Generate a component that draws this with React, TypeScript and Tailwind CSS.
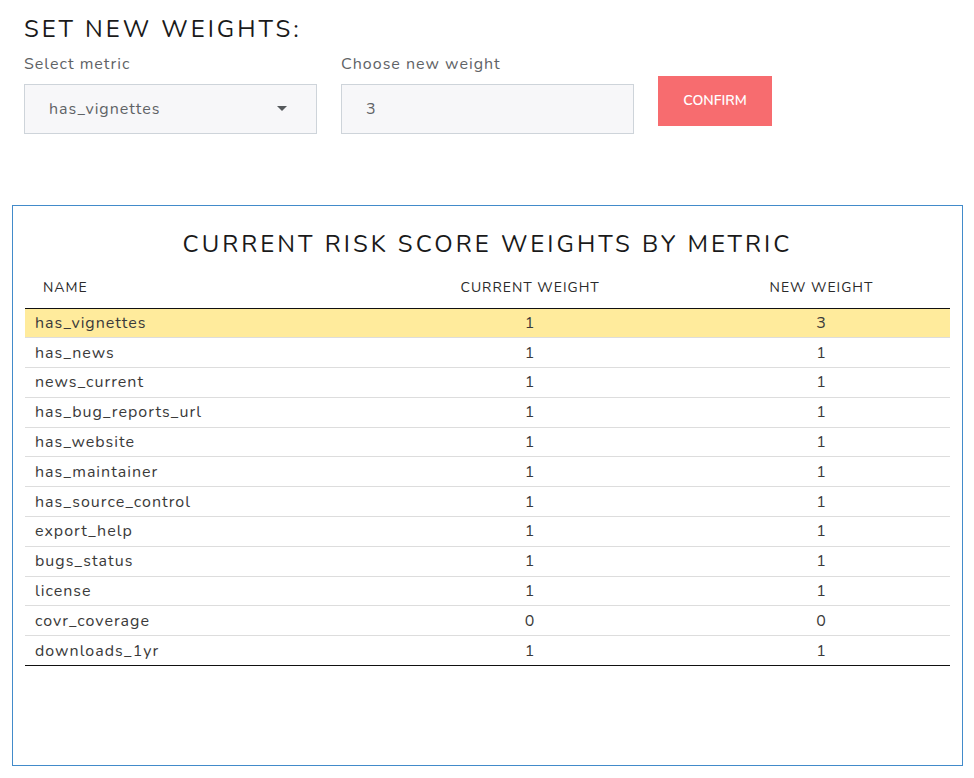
const rows: [string, number, number][] = [
  ["has_vignettes", 1, 3],
  ["has_news", 1, 1],
  ["news_current", 1, 1],
  ["has_bug_reports_url", 1, 1],
  ["has_website", 1, 1],
  ["has_maintainer", 1, 1],
  ["has_source_control", 1, 1],
  ["export_help", 1, 1],
  ["bugs_status", 1, 1],
  ["license", 1, 1],
  ["covr_coverage", 0, 0],
  ["downloads_1yr", 1, 1],
];

export default function App() {
  return (
    <main className="pt-[13px] pr-[11px] pb-3 pl-3 font-['Nunito','Nunito_Sans','Open_Sans',sans-serif] text-[#1a1a1a]">
      <section className="px-3">
        <h1 className="text-2xl leading-8 tracking-[3px] uppercase">Set new weights:</h1>
        <form className="mt-[7px] flex gap-6" onSubmit={(e) => e.preventDefault()}>
          <div className="flex max-w-[293px] flex-1 flex-col">
            <label htmlFor="metric" className="h-8 text-base tracking-[1px] text-[#5f6366]">Select metric</label>
            <div className="relative">
              <select id="metric" defaultValue="has_vignettes" className="h-[50px] w-full appearance-none border border-[#ced4da] bg-[#f7f7f9] px-6 text-base tracking-[1px] text-[#5f6366]">
                {rows.map(([name]) => <option key={name}>{name}</option>)}
              </select>
              <svg className="pointer-events-none absolute top-[22px] right-[30px]" width="10" height="5" viewBox="0 0 10 5" aria-hidden="true"><path d="M0 0h10L5 5z" fill="#55595c" /></svg>
            </div>
          </div>
          <div className="flex max-w-[293px] flex-1 flex-col">
            <label htmlFor="weight" className="h-8 text-base tracking-[1px] text-[#5f6366]">Choose new weight</label>
            <input id="weight" defaultValue="3" className="h-[50px] w-full border border-[#ced4da] bg-[#f7f7f9] px-6 text-base tracking-[1px] text-[#5f6366]" />
          </div>
          <button className="mt-6 h-[50px] w-[114px] bg-[#f76c6f] text-sm font-semibold text-white uppercase">Confirm</button>
        </form>
      </section>
      <section className="mt-[71px] h-[561px] border border-[#428bca] px-3 pt-[22px]">
        <h2 className="text-center text-2xl leading-8 tracking-[3px] uppercase">Current risk score weights by metric</h2>
        <table className="mt-2 h-[398px] w-full table-fixed border-collapse border-b border-[#111] text-base tracking-[1px] text-[#3a3a3a]">
          <thead>
            <tr className="h-10 border-b border-[#111] text-sm text-[#2a2a2a] uppercase">
              <th className="w-[37%] px-[18px] text-left font-normal">Name</th>
              <th className="w-[35%] pl-0.5 font-normal">Current weight</th>
              <th className="w-[28%] pl-0.5 font-normal">New weight</th>
            </tr>
          </thead>
          <tbody>
            {rows.map(([name, current, next]) => (
              <tr key={name} className={current === next ? "border-t border-[#ddd]" : "bg-[#ffeb9c]"}>
                <td className="px-[10px]">{name}</td>
                <td className="pl-0.5 text-center">{current}</td>
                <td className="pl-0.5 text-center">{next}</td>
              </tr>
            ))}
          </tbody>
        </table>
      </section>
    </main>
  );
}
